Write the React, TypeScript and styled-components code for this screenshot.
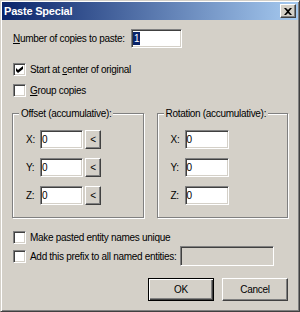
import React from 'react';
import styled, { createGlobalStyle } from 'styled-components';

const face = '#d4d0c8';

const GlobalStyle = createGlobalStyle`
  html, body {
    margin: 0;
    padding: 0;
    background: ${face};
  }
  body {
    font-family: 'Liberation Sans', Arial, sans-serif;
    font-size: 10px;
    letter-spacing: -0.3px;
    white-space: nowrap;
    color: #000;
  }
`;

const Window = styled.div`
  box-sizing: border-box;
  width: 300px;
  height: 312px;
  padding: 1px;
  background: ${face};
  border: 1px solid;
  border-color: ${face} #404040 #404040 ${face};
  box-shadow: inset 1px 1px 0 #fff, inset -1px -1px 0 #808080;
  display: flex;
  flex-direction: column;
`;

const TitleBar = styled.div`
  height: 18px;
  display: flex;
  align-items: center;
  padding: 0 2px;
  background: linear-gradient(to right, #0a246a, #a6caf0);
`;

const Title = styled.span`
  font-weight: bold;
  font-size: 11px;
  letter-spacing: -0.2px;
  color: #fff;
`;

const Raised = styled.button`
  box-sizing: border-box;
  padding: 0;
  margin: 0;
  background: ${face};
  border: 1px solid;
  border-color: #fff #404040 #404040 #fff;
  box-shadow: inset -1px -1px 0 #808080;
  font: inherit;
  letter-spacing: inherit;
  color: #000;
  display: flex;
  align-items: center;
  justify-content: center;
`;

const CloseButton = styled(Raised)`
  width: 16px;
  height: 14px;
  margin-left: auto;
`;

const Body = styled.div`
  display: flex;
  flex-direction: column;
  padding: 9px 10px 0 10px;
`;

const CopiesRow = styled.div`
  display: flex;
  align-items: center;
  height: 19px;
  padding-left: 1px;
`;

const CopiesLabel = styled.span`
  width: 118px;
`;

const Field = styled.div<{ $w: number; $h?: number; $disabled?: boolean }>`
  box-sizing: border-box;
  width: ${(p) => p.$w}px;
  height: ${(p) => p.$h ?? 19}px;
  padding: 0 2px 0 1px;
  background: ${(p) => (p.$disabled ? face : '#fff')};
  border: 1px solid;
  border-color: #808080 #fff #fff #808080;
  box-shadow: inset 1px 1px 0 #404040, inset -1px -1px 0 ${face};
  display: flex;
  align-items: center;
`;

const Selected = styled.span`
  background: #0a246a;
  color: #fff;
  line-height: 13px;
  padding: 0 1px;
`;

const CheckRow = styled.label<{ $top: number; $h?: number }>`
  display: flex;
  align-items: center;
  gap: 4px;
  height: ${(p) => p.$h ?? 13}px;
  margin-top: ${(p) => p.$top}px;
  padding-left: 1px;
`;

const Box = styled.span`
  box-sizing: border-box;
  width: 13px;
  height: 13px;
  flex: none;
  background: #fff;
  border: 1px solid;
  border-color: #808080 #fff #fff #808080;
  box-shadow: inset 1px 1px 0 #404040, inset -1px -1px 0 ${face};
  display: flex;
  align-items: center;
  justify-content: center;
`;

const Groups = styled.div`
  display: grid;
  grid-template-columns: 1fr 1fr;
  column-gap: 13px;
  margin-top: 10px;
`;

const Group = styled.fieldset`
  margin: 0;
  min-width: 0;
  padding: 0 0 12px 0;
  border: 1px solid #808080;
  box-shadow: inset 1px 1px 0 #fff, 1px 1px 0 #fff;
`;

const Legend = styled.legend`
  margin-left: 6px;
  padding: 0 2px;
  line-height: 13px;
  background: ${face};
`;

const Rows = styled.div`
  display: flex;
  flex-direction: column;
  gap: 9px;
  padding: 10px 0 0 13px;
`;

const AxisRow = styled.div`
  display: flex;
  align-items: center;
`;

const AxisLabel = styled.span`
  width: 14px;
`;

const PickButton = styled(Raised)`
  width: 16px;
  height: 19px;
  margin-left: 2px;
`;

const PrefixField = styled(Field)`
  margin-left: auto;
  margin-right: 14px;
`;

const Buttons = styled.div`
  display: flex;
  justify-content: flex-end;
  gap: 8px;
  margin-top: 12px;
`;

const DialogButton = styled(Raised)<{ $default?: boolean }>`
  width: 66px;
  height: 23px;
  ${(p) =>
    p.$default &&
    `
    border-color: #000;
    box-shadow: inset 1px 1px 0 #fff, inset -1px -1px 0 #404040, inset -2px -2px 0 #808080;
  `}
`;

function Check({ on }: { on?: boolean }) {
  return (
    <Box>
      {on && (
        <svg width="7" height="7" viewBox="0 0 7 7">
          <path d="M0 2l2 2 5-4v3L2 7 0 5z" fill="#000" />
        </svg>
      )}
    </Box>
  );
}

function AxisGroup({ title, width, pick }: { title: string; width: number; pick?: boolean }) {
  return (
    <Group>
      <Legend>{title}</Legend>
      <Rows>
        {['X', 'Y', 'Z'].map((a) => (
          <AxisRow key={a}>
            <AxisLabel>{a}:</AxisLabel>
            <Field $w={width}>0</Field>
            {pick && <PickButton>&lt;</PickButton>}
          </AxisRow>
        ))}
      </Rows>
    </Group>
  );
}

export default function App() {
  return (
    <>
      <GlobalStyle />
      <Window>
        <TitleBar>
          <Title>Paste Special</Title>
          <CloseButton>
            <svg width="8" height="7" viewBox="0 0 8 7">
              <path d="M0 0h2l2 2 2-2h2L5 3.5 8 7H6L4 5 2 7H0l3-3.5z" fill="#000" />
            </svg>
          </CloseButton>
        </TitleBar>
        <Body>
          <CopiesRow>
            <CopiesLabel>
              <u>N</u>umber of copies to paste:
            </CopiesLabel>
            <Field $w={51}>
              <Selected>1</Selected>
            </Field>
          </CopiesRow>
          <CheckRow $top={15}>
            <Check on />
            <span>
              Start at <u>c</u>enter of original
            </span>
          </CheckRow>
          <CheckRow $top={8}>
            <Check />
            <span>
              <u>G</u>roup copies
            </span>
          </CheckRow>
          <Groups>
            <AxisGroup title="Offset (accumulative):" width={43} pick />
            <AxisGroup title="Rotation (accumulative):" width={44} />
          </Groups>
          <CheckRow $top={13}>
            <Check />
            <span>Make pasted entity names unique</span>
          </CheckRow>
          <CheckRow $top={2} $h={20}>
            <Check />
            <span>Add this prefix to all named entities:</span>
            <PrefixField $w={96} $h={20} $disabled />
          </CheckRow>
          <Buttons>
            <DialogButton $default>OK</DialogButton>
            <DialogButton>Cancel</DialogButton>
          </Buttons>
        </Body>
      </Window>
    </>
  );
}
